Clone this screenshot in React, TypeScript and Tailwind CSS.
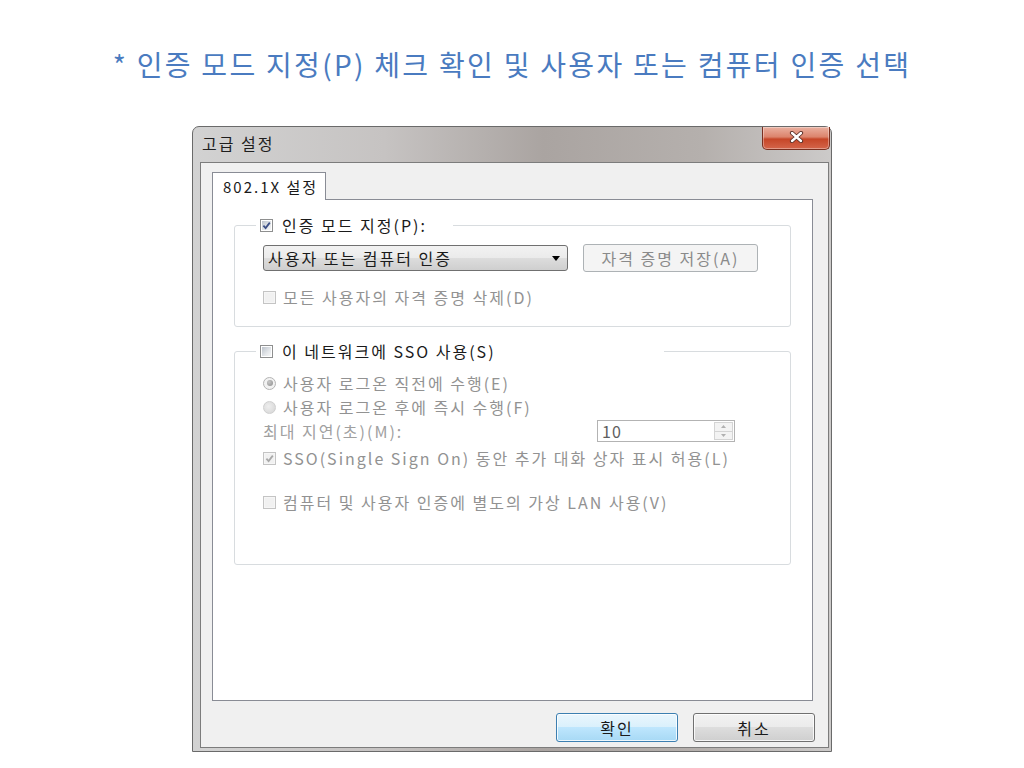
import React from "react";

function CheckBox({ checked = false, disabled = false }: { checked?: boolean; disabled?: boolean }) {
  return (
    <span
      className={
        disabled
          ? "flex h-[13px] w-[13px] shrink-0 items-center justify-center border border-[#c4c4c4] bg-[#f6f6f6]"
          : "flex h-[13px] w-[13px] shrink-0 items-center justify-center border border-[#8e8f8f] bg-white"
      }
    >
      <span
        className={
          disabled
            ? "flex h-[9px] w-[9px] items-center justify-center bg-[#f1f1f1]"
            : "flex h-[9px] w-[9px] items-center justify-center bg-[linear-gradient(135deg,#bcc3cc_0%,#e4e7ea_60%,#f6f7f8_100%)]"
        }
      >
        {checked && (
          <svg width="9" height="9" viewBox="0 0 9 9">
            <path
              d="M1.4 4.6 L3.6 7 L7.8 1.6"
              fill="none"
              stroke={disabled ? "#a8a8a8" : "#3b4f86"}
              strokeWidth="1.8"
            />
          </svg>
        )}
      </span>
    </span>
  );
}

function Radio({ selected = false }: { selected?: boolean }) {
  return selected ? (
    <span className="flex h-[13px] w-[13px] shrink-0 items-center justify-center rounded-full border border-[#b4b4b4] bg-[#f2f2f2]">
      <span className="h-[6px] w-[6px] rounded-full bg-[radial-gradient(circle_at_35%_35%,#c8c8c8,#8c8c8c)]" />
    </span>
  ) : (
    <span className="h-[13px] w-[13px] shrink-0 rounded-full border border-[#cfcfcf] bg-[radial-gradient(circle_at_40%_40%,#eeeeee,#d4d4d4)]" />
  );
}

export default function App() {
  return (
    <div className="flex h-[768px] w-[1024px] flex-col items-center overflow-hidden bg-white font-['Noto_Sans_CJK_KR','Noto_Sans',sans-serif]">
      <h1 className="mt-[44px] whitespace-nowrap text-[28px] font-normal leading-[40px] tracking-[2.3px] text-[#4a7bc0]">
        * 인증 모드 지정(P) 체크 확인 및 사용자 또는 컴퓨터 인증 선택
      </h1>

      <div className="mt-[42px] flex h-[626px] w-[640px] flex-col rounded-t-[7px] border border-[#6a6a6a] bg-[linear-gradient(90deg,#d2d2d2_0%,#c6c3c2_30%,#aaa4a1_55%,#b5b0ad_80%,#cccac9_100%)] pb-[3px] text-[16px] tracking-[2px] text-[#1a1a1a]">
        {/* title bar */}
        <div className="flex h-[35px] shrink-0 items-start">
          <span className="ml-[9px] mt-[6px] leading-[20px] text-[#1e1e1e]">고급 설정</span>
          <div className="ml-auto mr-[1px] flex h-[23px] w-[68px] items-start justify-center rounded-b-[5px] border border-t-0 border-[#7a3020] bg-[linear-gradient(180deg,#eab0a0_0%,#dc846c_45%,#c64628_55%,#d4654a_100%)] pt-[4px] shadow-[inset_0_0_0_1px_rgba(255,255,255,0.35)]">
            <svg width="15" height="12" viewBox="0 0 15 12">
              <path d="M3 2 L12 10 M12 2 L3 10" stroke="#5a2e26" strokeWidth="4.2" strokeLinecap="round" />
              <path d="M3 2 L12 10 M12 2 L3 10" stroke="#ffffff" strokeWidth="2.4" strokeLinecap="round" />
            </svg>
          </div>
        </div>

        {/* client area */}
        <div className="ml-[7px] mr-[2px] flex flex-1 flex-col border border-[#7c7c7c] bg-[#f0f0f0] pt-[9px]">
          <div className="flex pl-[11px]">
            <div className="relative z-10 -mb-px flex h-[28px] w-[114px] items-center border border-b-0 border-[#898c95] bg-white pl-[10px] text-[15px] leading-[20px]">
              802.1X 설정
            </div>
          </div>
          <div className="ml-[11px] mr-[15px] flex flex-1 flex-col border border-[#898c95] bg-white px-[21px] pt-[15px]">
            {/* group 1 */}
            <fieldset className="rounded-[3px] border border-[#d8dcdf]">
              <legend className="ml-[21px] flex h-[20px] w-[197px] items-center pl-[4px]">
                <CheckBox checked />
                <span className="ml-[9px] leading-[20px]">인증 모드 지정(P):</span>
              </legend>
              <div className="flex flex-col pb-[19px] pl-[28px] pt-[9px]">
                <div className="flex h-[28px] items-center">
                  <div className="flex h-[26px] w-[305px] items-center rounded-[3px] border border-[#707070] bg-[linear-gradient(180deg,#f2f2f2_0%,#ebebeb_50%,#dddddd_50%,#cfcfcf_100%)] pl-[4px] pr-[7px]">
                    <span className="flex-1 leading-[20px]">사용자 또는 컴퓨터 인증</span>
                    <svg width="8" height="5" viewBox="0 0 8 5">
                      <path d="M0 0 H8 L4 5 Z" fill="#000" />
                    </svg>
                  </div>
                  <div className="ml-[15px] flex h-[28px] w-[175px] items-center justify-center rounded-[3px] border border-[#adb2b5] bg-[#f4f4f4] leading-[20px] text-[#8a8a8a]">
                    자격 증명 저장(A)
                  </div>
                </div>
                <div className="mt-[15px] flex h-[20px] items-center">
                  <CheckBox disabled />
                  <span className="ml-[7px] leading-[20px] text-[#929292]">모든 사용자의 자격 증명 삭제(D)</span>
                </div>
              </div>
            </fieldset>

            {/* group 2 */}
            <fieldset className="mt-[14px] rounded-[3px] border border-[#d8dcdf]">
              <legend className="ml-[21px] flex h-[20px] w-[408px] items-center pl-[4px]">
                <CheckBox />
                <span className="ml-[9px] leading-[20px]">이 네트워크에 SSO 사용(S)</span>
              </legend>
              <div className="flex flex-col pb-[52px] pl-[28px] pt-[12px] text-[#929292]">
                <div className="flex h-[20px] items-center">
                  <Radio selected />
                  <span className="ml-[7px] leading-[18px]">사용자 로그온 직전에 수행(E)</span>
                </div>
                <div className="mt-[4px] flex h-[20px] items-center">
                  <Radio />
                  <span className="ml-[7px] leading-[18px]">사용자 로그온 후에 즉시 수행(F)</span>
                </div>
                <div className="mt-[2px] flex h-[24px] items-center">
                  <span className="w-[334px] leading-[18px] text-[#a0a0a0]">최대 지연(초)(M):</span>
                  <div className="flex h-[22px] w-[138px] border border-[#b3b3b3] bg-white">
                    <span className="flex-1 pl-[4px] leading-[20px] tracking-[1px] text-[#5e5e5e]">10</span>
                    <div className="m-[1px] flex w-[19px] flex-col border border-[#d4d4d4] bg-[#f3f3f3]">
                      <div className="flex flex-1 items-center justify-center border-b border-[#d4d4d4]">
                        <svg width="5" height="3" viewBox="0 0 5 3">
                          <path d="M0 3 H5 L2.5 0 Z" fill="#b0b0b0" />
                        </svg>
                      </div>
                      <div className="flex flex-1 items-center justify-center">
                        <svg width="5" height="3" viewBox="0 0 5 3">
                          <path d="M0 0 H5 L2.5 3 Z" fill="#b0b0b0" />
                        </svg>
                      </div>
                    </div>
                  </div>
                </div>
                <div className="mt-[5px] flex h-[20px] items-center">
                  <CheckBox checked disabled />
                  <span className="ml-[7px] leading-[20px]">SSO(Single Sign On) 동안 추가 대화 상자 표시 허용(L)</span>
                </div>
                <div className="mt-[24px] flex h-[20px] items-center">
                  <CheckBox disabled />
                  <span className="ml-[7px] leading-[20px]">컴퓨터 및 사용자 인증에 별도의 가상 LAN 사용(V)</span>
                </div>
              </div>
            </fieldset>
          </div>

          {/* buttons */}
          <div className="flex h-[46px] shrink-0 justify-end gap-[15px] pr-[13px] pt-[12px]">
            <div className="flex h-[29px] w-[122px] items-center justify-center rounded-[3px] border border-[#3c7fb1] bg-[linear-gradient(180deg,#eaf6fd_0%,#d9f0fc_50%,#bee6fd_50%,#a7d9f5_100%)] leading-[20px] shadow-[inset_0_0_0_1px_rgba(255,255,255,0.8)]">
              확인
            </div>
            <div className="flex h-[29px] w-[122px] items-center justify-center rounded-[3px] border border-[#707070] bg-[linear-gradient(180deg,#f2f2f2_0%,#ebebeb_50%,#dddddd_50%,#cfcfcf_100%)] leading-[20px] shadow-[inset_0_0_0_1px_rgba(255,255,255,0.8)]">
              취소
            </div>
          </div>
        </div>
      </div>
    </div>
  );
}
